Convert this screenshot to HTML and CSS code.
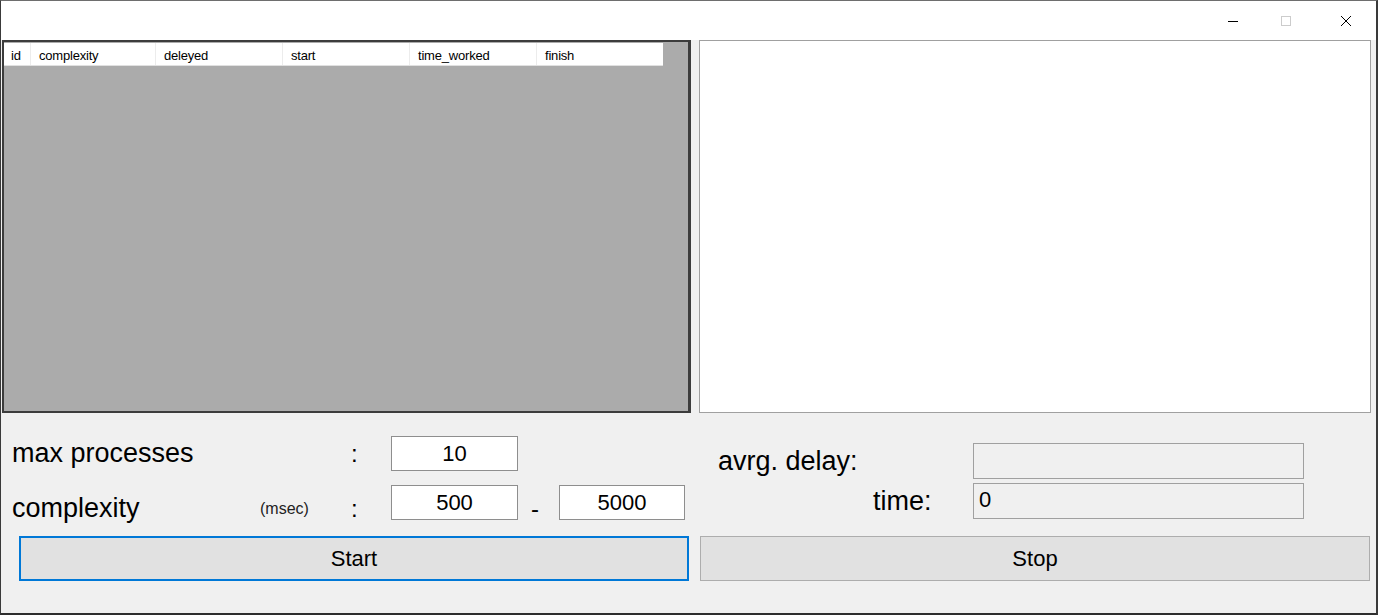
FILE: index.html
```html
<!DOCTYPE html>
<html>
<head>
<meta charset="utf-8">
<link rel="stylesheet" href="styles.css">
</head>
<body>
<div class="window">
  <div class="titlebar">
    <div class="cap-btn cap-min">
      <svg width="12" height="12" viewBox="0 0 12 12"><path d="M1 6.5H11" stroke="#000" stroke-width="1"/></svg>
    </div>
    <div class="cap-btn">
      <svg width="12" height="12" viewBox="0 0 12 12"><rect x="1.5" y="1.5" width="9" height="9" fill="none" stroke="#cccccc" stroke-width="1"/></svg>
    </div>
    <div class="cap-btn cap-close">
      <svg width="12" height="12" viewBox="0 0 12 12"><path d="M1 1L11 11M11 1L1 11" stroke="#000" stroke-width="1"/></svg>
    </div>
  </div>
  <div class="client">
    <div class="top">
      <div class="grid">
        <div class="grid-header">
          <div class="hcell hid">id</div>
          <div class="hcell w125">complexity</div>
          <div class="hcell">deleyed</div>
          <div class="hcell">start</div>
          <div class="hcell">time_worked</div>
          <div class="hcell">finish</div>
        </div>
      </div>
      <div class="listbox"></div>
    </div>
    <div class="bottom">
      <div class="fields-left">
        <div class="lbl big">max processes</div>
        <div class="lbl"></div>
        <div class="lbl colon">:</div>
        <div class="input">10</div>
        <div></div>
        <div></div>

        <div class="lbl big low">complexity</div>
        <div class="lbl small low">(msec)</div>
        <div class="lbl colon low">:</div>
        <div class="input">500</div>
        <div class="lbl dash low">-</div>
        <div class="input">5000</div>
      </div>
      <div class="fields-right">
        <div class="lbl big">avrg. delay:</div>
        <div class="output"></div>
        <div class="lbl big time">time:</div>
        <div class="output left">0</div>
      </div>
      <div class="btn-cell-left"><div class="btn focused">Start</div></div>
      <div class="btn-cell-right"><div class="btn">Stop</div></div>
    </div>
  </div>
</div>
</body>
</html>
```

FILE: styles.css
```css
* { box-sizing: border-box; }
html, body { margin: 0; padding: 0; background: #ffffff; }
body { font-family: "Liberation Sans", Arial, sans-serif; color: #000; }

.window {
  width: 1378px;
  height: 615px;
  border-top: 1px solid #6e6e6e;
  border-left: 1px solid #3a3a3a;
  border-right: 2px solid #3a3a3a;
  border-bottom: 2px solid #2e2e2e;
  background: #f0f0f0;
  display: flex;
  flex-direction: column;
  overflow: hidden;
}

.titlebar {
  height: 39px;
  background: #ffffff;
  display: flex;
  justify-content: flex-end;
  align-items: center;
  flex-shrink: 0;
}
.cap-btn {
  width: 58px;
  height: 39px;
  display: flex;
  align-items: center;
  justify-content: center;
}
.cap-min { padding-left: 10px; }
.cap-close { width: 61px; }

.client {
  flex: 1;
  display: flex;
  flex-direction: column;
  padding-left: 1px;
}

.top {
  display: flex;
  gap: 8px;
  height: 373px;
  padding-right: 5px;
}
.grid {
  width: 689px;
  height: 373px;
  background: #ababab;
  border: 2px solid #3c3c3c;
  border-right-width: 3px;
  padding-top: 1px;
}
.grid-header {
  display: flex;
  height: 23px;
  width: 659px;
  background: #ffffff;
  border-bottom: 1px solid #e0e0e0;
}
.hcell {
  width: 127px;
  font-size: 13px;
  line-height: 22px;
  padding-top: 2px;
  padding-left: 8px;
  border-right: 1px solid #ececec;
  white-space: nowrap;
  letter-spacing: -0.2px;
}
.hcell.hid { width: 27px; padding-left: 7px; }
.hcell.w125 { width: 125px; }
.hcell:last-child { width: 126px; border-right: none; }

.listbox {
  flex: 1;
  height: 373px;
  background: #ffffff;
  border: 1px solid #a0a0a0;
}

.bottom {
  display: grid;
  grid-template-columns: 688px 1fr;
  grid-template-rows: 123px 45px;
}

.fields-left {
  padding: 23px 0 0 10px;
  display: grid;
  grid-template-columns: 248px 91px 40px 127px 41px 126px;
  grid-template-rows: 35px 35px;
  row-gap: 14px;
  align-items: center;
}
.lbl { white-space: nowrap; }
.big { font-size: 27px; }
.small { font-size: 16px; color: #222; }
.colon { font-size: 24px; }
.dash { font-size: 24px; padding-left: 13px; }
.low { position: relative; top: 6px; }

.input {
  height: 35px;
  background: #ffffff;
  border: 1px solid #8e8e8e;
  font-size: 22px;
  line-height: 33px;
  text-align: center;
}

.fields-right {
  padding: 30px 0 0 28px;
  display: grid;
  grid-template-columns: 255px 331px;
  grid-template-rows: 36px 36px;
  row-gap: 4px;
  align-items: center;
}
.time { padding-left: 155px; }
.output {
  height: 36px;
  background: #f0f0f0;
  border: 1px solid #a0a0a0;
  font-size: 22px;
  line-height: 32px;
}
.output.left { padding-left: 5px; }

.btn-cell-left { padding-left: 17px; }
.btn-cell-right { padding-left: 10px; }
.btn {
  width: 670px;
  height: 45px;
  background: #e1e1e1;
  border: 1px solid #adadad;
  font-size: 22px;
  display: flex;
  align-items: center;
  justify-content: center;
}
.btn.focused { border: 2px solid #0078d7; }
```
